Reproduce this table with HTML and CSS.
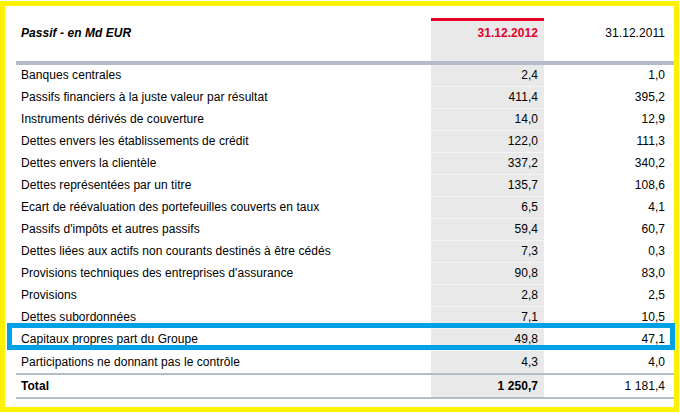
FILE: index.html
```html
<!DOCTYPE html>
<html lang="fr">
<head>
<meta charset="utf-8">
<title>Passif - en Md EUR</title>
<link rel="stylesheet" href="styles.css">
</head>
<body>
<div class="frame">
  <table class="bilan">
    <colgroup>
      <col class="c-label">
      <col class="c-cur">
      <col class="c-prev">
    </colgroup>
    <thead>
      <tr class="head">
        <th class="label">Passif - en Md EUR</th>
        <th class="cur">31.12.2012</th>
        <th class="prev">31.12.2011</th>
      </tr>
    </thead>
    <tbody>
      <tr><td class="label">Banques centrales</td><td class="cur">2,4</td><td class="prev">1,0</td></tr>
      <tr><td class="label">Passifs financiers à la juste valeur par résultat</td><td class="cur">411,4</td><td class="prev">395,2</td></tr>
      <tr><td class="label">Instruments dérivés de couverture</td><td class="cur">14,0</td><td class="prev">12,9</td></tr>
      <tr><td class="label">Dettes envers les établissements de crédit</td><td class="cur">122,0</td><td class="prev">111,3</td></tr>
      <tr><td class="label">Dettes envers la clientèle</td><td class="cur">337,2</td><td class="prev">340,2</td></tr>
      <tr><td class="label">Dettes représentées par un titre</td><td class="cur">135,7</td><td class="prev">108,6</td></tr>
      <tr><td class="label">Ecart de réévaluation des portefeuilles couverts en taux</td><td class="cur">6,5</td><td class="prev">4,1</td></tr>
      <tr><td class="label">Passifs d'impôts et autres passifs</td><td class="cur">59,4</td><td class="prev">60,7</td></tr>
      <tr><td class="label">Dettes liées aux actifs non courants destinés à être cédés</td><td class="cur">7,3</td><td class="prev">0,3</td></tr>
      <tr><td class="label">Provisions techniques des entreprises d'assurance</td><td class="cur">90,8</td><td class="prev">83,0</td></tr>
      <tr><td class="label">Provisions</td><td class="cur">2,8</td><td class="prev">2,5</td></tr>
      <tr><td class="label">Dettes subordonnées</td><td class="cur">7,1</td><td class="prev">10,5</td></tr>
      <tr><td class="label">Capitaux propres part du Groupe</td><td class="cur">49,8</td><td class="prev">47,1</td></tr>
      <tr><td class="label">Participations ne donnant pas le contrôle</td><td class="cur">4,3</td><td class="prev">4,0</td></tr>
    </tbody>
    <tfoot>
      <tr class="total"><td class="label">Total</td><td class="cur">1 250,7</td><td class="prev">1 181,4</td></tr>
    </tfoot>
  </table>
  <div class="highlight"></div>
</div>
</body>
</html>
```

FILE: styles.css
```css
html, body {
  margin: 0;
  padding: 0;
  background: #ffffff;
}

body {
  font-family: "Liberation Sans", Arial, sans-serif;
  font-size: 12px;
  color: #000000;
}

.frame {
  position: relative;
  box-sizing: border-box;
  width: 679px;
  height: 411px;
  margin-top: 1px;
  border: 5px solid #fff200;
  padding: 12px 0 0 11px;
}

.bilan {
  border-collapse: collapse;
  table-layout: fixed;
  width: 658px;
}

.c-label { width: 415px; }
.c-cur { width: 113px; }
.c-prev { width: 130px; }

.bilan th,
.bilan td {
  padding: 0;
  white-space: nowrap;
  font-weight: normal;
  letter-spacing: 0.05px;
}

.bilan .label {
  text-align: left;
  padding-left: 5px;
}

.bilan .cur {
  text-align: right;
  padding-right: 6px;
  background: #e9e9e9;
}

.bilan .prev {
  text-align: right;
  padding-right: 9px;
}

/* header */
.head th {
  height: 43px;
  padding-bottom: 15px;
  vertical-align: middle;
  border-bottom: 4px solid #b4bcc8;
  box-sizing: border-box;
}

.head .label {
  font-weight: bold;
  font-style: italic;
}

.head .cur {
  border-top: 3px solid #e4002b;
  color: #e4002b;
  font-weight: bold;
}

/* body rows */
.bilan tbody td {
  height: 21px;
  border-bottom: 1px solid transparent;
  vertical-align: middle;
}

.bilan tbody td.cur {
  border-bottom-color: #f4f4f4;
}

.bilan tbody tr:last-child td {
  border-bottom: none;
  height: 22px;
}

/* total row */
.total td {
  height: 22px;
  border-top: 2px solid #b4bcc8;
  border-bottom: 2px solid #b4bcc8;
  vertical-align: middle;
}

.total .label,
.total .cur {
  font-weight: bold;
}

/* blue highlight around "Capitaux propres" */
.highlight {
  position: absolute;
  left: 2px;
  top: 317px;
  width: 668px;
  height: 27px;
  box-sizing: border-box;
  border: 5px solid #00a0e4;
}
```
